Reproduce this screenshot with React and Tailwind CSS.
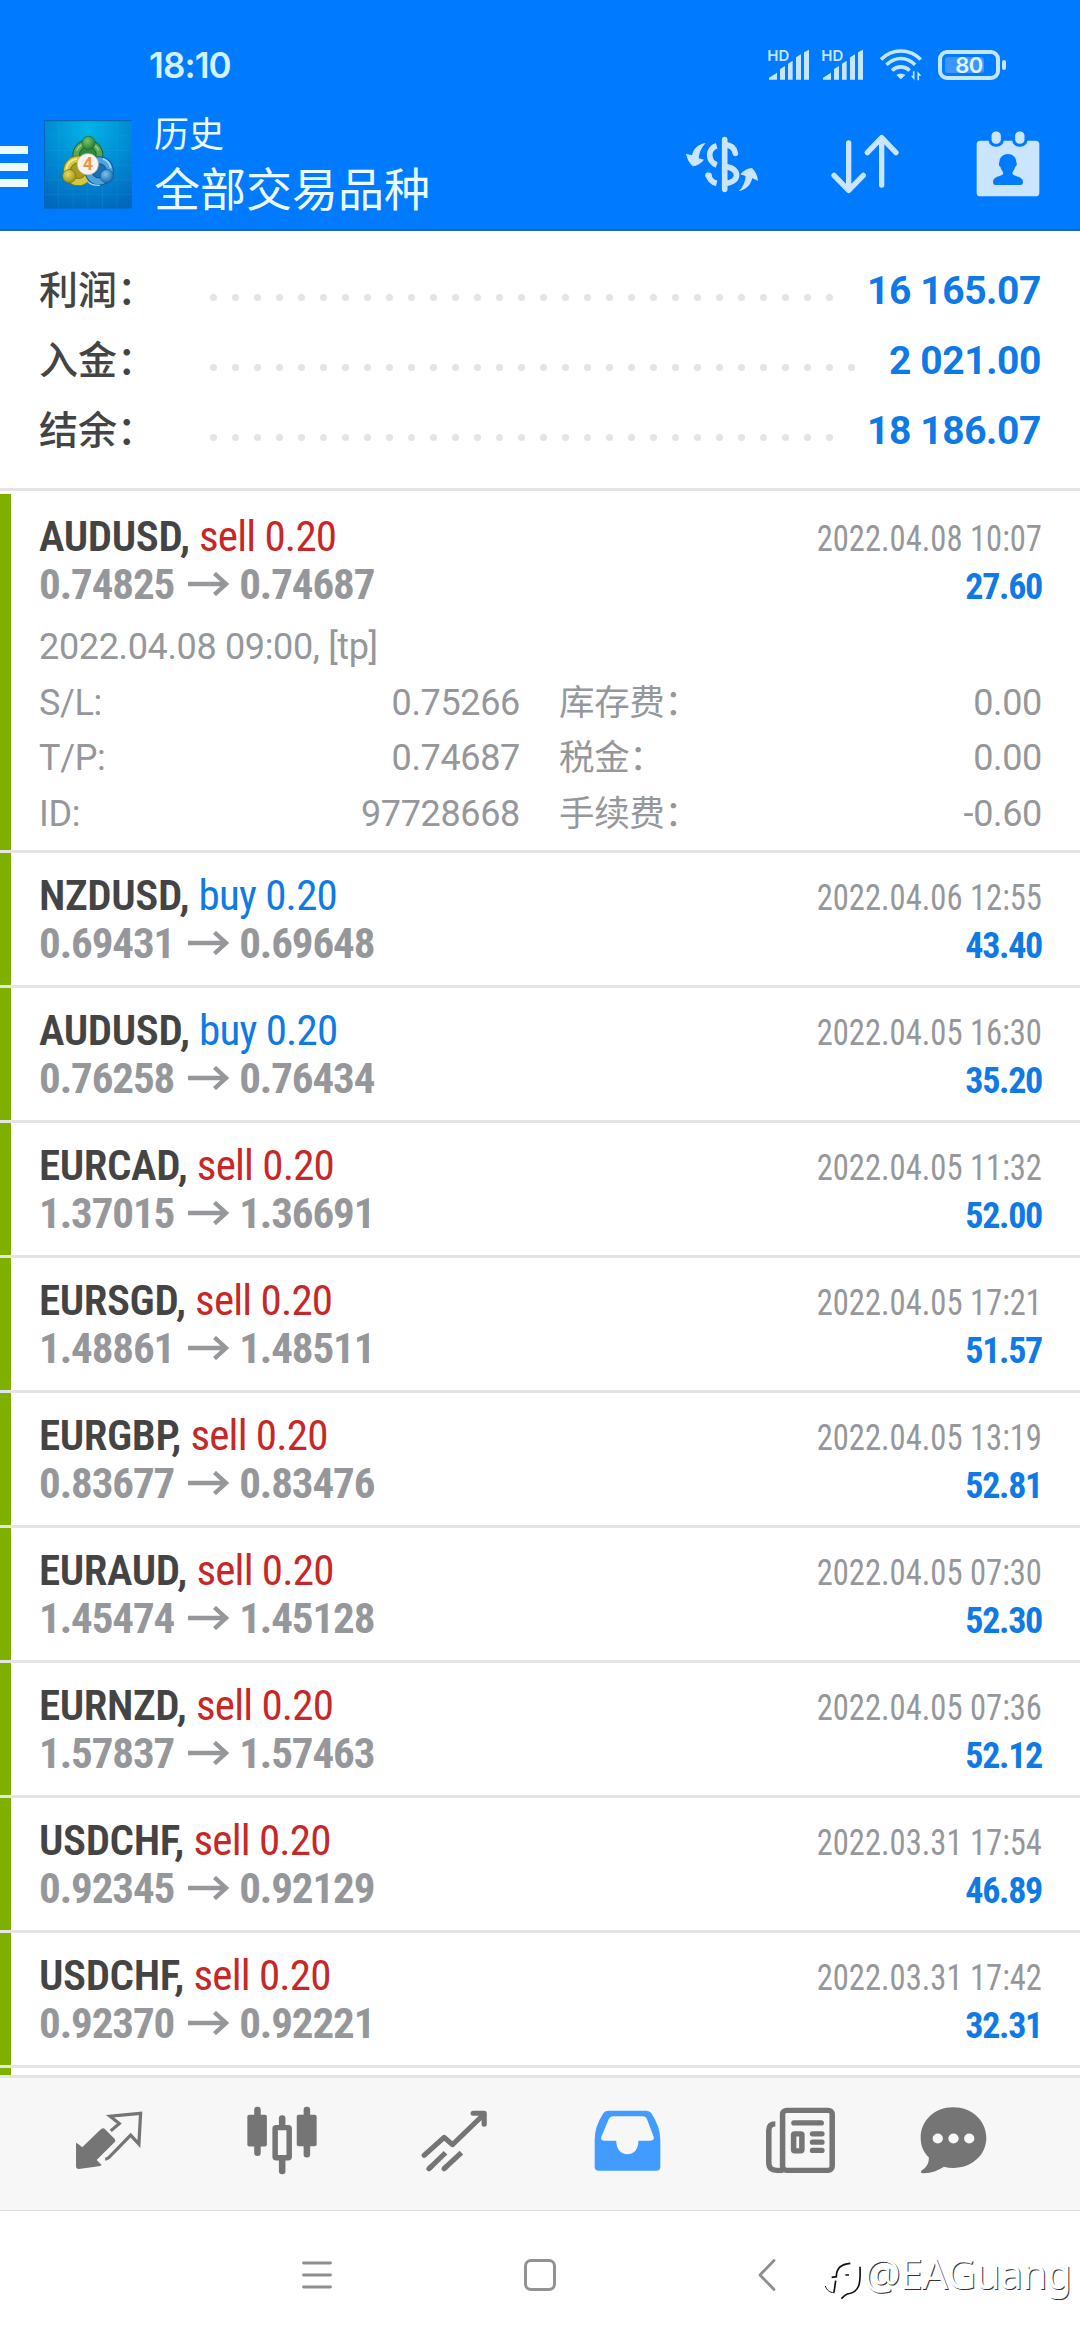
const SUMMARY = [
    { label: '利润：', value: '16 165.07', dots: 29 },
    { label: '入金：', value: '2 021.00', dots: 30 },
    { label: '结余：', value: '18 186.07', dots: 29 },
];

const DEALS = [
    {
        symbol: 'AUDUSD', side: 'sell', open: '0.74825', close: '0.74687', time: '2022.04.08 10:07', profit: '27.60',
        details: {
            comment: '2022.04.08 09:00, [tp]',
            rows: [
                ['S/L:', '0.75266', '库存费：', '0.00'],
                ['T/P:', '0.74687', '税金：', '0.00'],
                ['ID:', '97728668', '手续费：', '-0.60'],
            ],
        },
    },
    { symbol: 'NZDUSD', side: 'buy', open: '0.69431', close: '0.69648', time: '2022.04.06 12:55', profit: '43.40' },
    { symbol: 'AUDUSD', side: 'buy', open: '0.76258', close: '0.76434', time: '2022.04.05 16:30', profit: '35.20' },
    { symbol: 'EURCAD', side: 'sell', open: '1.37015', close: '1.36691', time: '2022.04.05 11:32', profit: '52.00' },
    { symbol: 'EURSGD', side: 'sell', open: '1.48861', close: '1.48511', time: '2022.04.05 17:21', profit: '51.57' },
    { symbol: 'EURGBP', side: 'sell', open: '0.83677', close: '0.83476', time: '2022.04.05 13:19', profit: '52.81' },
    { symbol: 'EURAUD', side: 'sell', open: '1.45474', close: '1.45128', time: '2022.04.05 07:30', profit: '52.30' },
    { symbol: 'EURNZD', side: 'sell', open: '1.57837', close: '1.57463', time: '2022.04.05 07:36', profit: '52.12' },
    { symbol: 'USDCHF', side: 'sell', open: '0.92345', close: '0.92129', time: '2022.03.31 17:54', profit: '46.89' },
    { symbol: 'USDCHF', side: 'sell', open: '0.92370', close: '0.92221', time: '2022.03.31 17:42', profit: '32.31' },
];

function SignalIcon() {
    return (
        <svg width="42" height="32" viewBox="0 0 126 96" className="shrink-0 overflow-visible text-[#c5e6ff]">
            <text x="-2" y="36" fontSize="45" fontWeight="600" fontFamily="Inter, sans-serif" fill="currentColor">HD</text>
            <path fill="currentColor" d="M3 92v-6l24-15v21zM36 92V60l15-9v41zM60 92V44l14-9v57zM84 92V25l15-9v76zM108 92V10l15-8v90z" />
        </svg>
    );
}

function WifiIcon() {
    return (
        <svg width="42" height="34" viewBox="0 0 129 102" className="shrink-0 text-[#c5e6ff]">
            <g fill="none" stroke="currentColor" strokeWidth="11">
                <path d="M3 34C36-1 92-1 125 34" />
                <path d="M20 50C46 25 82 25 108 50" />
                <path d="M37 68C53 53 75 53 91 68" />
            </g>
            <path fill="currentColor" d="M50 82c8-6 20-6 28 0L64 95zM106 70v28l-11-14h6V70zM115 98V70l12 14h-7v14z" />
        </svg>
    );
}

function BatteryIcon() {
    return (
        <div className="flex items-center gap-[2px]">
            <div className="relative w-[62px] h-[30px] rounded-[9px] border-4 border-[#c5e6ff] flex items-center justify-center">
                <span className="absolute left-[3px] top-[3px] w-[39px] h-4 rounded-[3px] bg-[#3d95ff]" />
                <span className="relative font-['Inter',sans-serif] font-semibold text-[22px] leading-none tracking-[-0.5px] text-[#e0f6ff]">80</span>
            </div>
            <span className="w-1 h-[10px] rounded-full bg-[#c5e6ff]" />
        </div>
    );
}

function AppLogo() {
    return (
        <svg width="88" height="89" viewBox="18 20 265 266" className="shrink-0">
            <defs>
                <radialGradient id="logoBg" cx="0.5" cy="0.1" r="0.95">
                    <stop offset="0" stopColor="#00b4e6" />
                    <stop offset="0.55" stopColor="#0088d2" />
                    <stop offset="1" stopColor="#0068bd" />
                </radialGradient>
                <radialGradient id="logoGreen" cx="0.4" cy="0.35" r="0.7">
                    <stop offset="0" stopColor="#7ec36a" />
                    <stop offset="1" stopColor="#1f7a2c" />
                </radialGradient>
                <radialGradient id="logoYellow" cx="0.4" cy="0.35" r="0.7">
                    <stop offset="0" stopColor="#e9dc5a" />
                    <stop offset="1" stopColor="#988c16" />
                </radialGradient>
                <radialGradient id="logoBlue" cx="0.4" cy="0.35" r="0.7">
                    <stop offset="0" stopColor="#7cc4ee" />
                    <stop offset="1" stopColor="#1564ac" />
                </radialGradient>
            </defs>
            <rect x="18" y="20" width="265" height="266" fill="url(#logoBg)" />
            <path d="M18 67h265M18 111h265M18 155h265M18 199h265M18 243h265M62 20v266M106 20v266M150 20v266M194 20v266M238 20v266" stroke="#35b0e4" strokeOpacity="0.25" strokeWidth="2" />
            <path d="M18 21h265M19 20v266" stroke="#0a5fae" strokeWidth="3" />
            <circle cx="150" cy="124" r="35" fill="#2f8a3c" stroke="#1d662b" strokeWidth="23" />
            <circle cx="150" cy="124" r="35" fill="none" stroke="#57a851" strokeWidth="17" />
            <path d="M116 111a37 37 0 0 1 67 0" fill="none" stroke="#9ad08e" strokeWidth="4" />
            <circle cx="121" cy="172" r="34" fill="#a79c22" stroke="#827a19" strokeWidth="24" />
            <circle cx="121" cy="172" r="34" fill="none" stroke="#d3c93c" strokeWidth="18" />
            <path d="M85 169a36 36 0 0 1 32-33" fill="none" stroke="#f3eda0" strokeWidth="5" />
            <circle cx="184" cy="172" r="32" fill="#1d6fb4" stroke="#0f5796" strokeWidth="24" />
            <circle cx="184" cy="172" r="32" fill="none" stroke="#4ba4dd" strokeWidth="18" />
            <path d="M195 136a35 35 0 0 1 24 28" fill="none" stroke="#a0d6f4" strokeWidth="5" />
            <path d="M150 205q14 12 36 11" fill="none" stroke="#a0d6f4" strokeWidth="4" />
            <circle cx="152" cy="88" r="20" fill="url(#logoGreen)" stroke="#1d662b" strokeWidth="2" />
            <circle cx="94" cy="188" r="20" fill="url(#logoYellow)" stroke="#766d12" strokeWidth="2" />
            <circle cx="207" cy="188" r="20" fill="url(#logoBlue)" stroke="#0f5796" strokeWidth="2" />
            <circle cx="150" cy="152" r="32" fill="#f7f4f2" stroke="#b9b5a8" strokeWidth="2" />
            <text x="150" y="171" textAnchor="middle" fontSize="54" fontWeight="700" fontFamily="Roboto, sans-serif" fill="#ef9440">4</text>
        </svg>
    );
}

function CurrencyIcon() {
    return (
        <svg width="90" height="76" viewBox="0 0 270 228" className="shrink-0 text-[#cce5ff]">
            <path fill="currentColor" d="M77 51C55 55 41 66 36 88l-18-5c3 14 9 27 20 38 13-2 24-8 34-20l-16-4c1-17 8-32 21-46zM176 196c22-5 35-17 41-39l17 7c-1-14-7-27-18-38-13 1-25 7-35 19l16 5c-1 18-8 33-21 46z" />
            <g fill="none" stroke="currentColor" strokeWidth="17">
                <path d="M110 59c-28 8-28 48 0 58" />
                <path d="M110 172c-13-3-22-12-24-24" />
                <path d="M84 148h3M134 41v149" strokeLinecap="round" />
                <path d="M136 56c18 2 28 11 30 26" strokeLinecap="round" />
                <path d="M136 122c46 4 44 48 0 50" />
            </g>
        </svg>
    );
}

function SortIcon() {
    return (
        <svg width="70" height="62" viewBox="570 400 210 186" fill="none" stroke="#cce5ff" strokeWidth="16" strokeLinecap="round" strokeLinejoin="round" className="shrink-0">
            <path d="M626 430v142M582 527l44 45 44-45M725 556V414M682 459l43-45 43 45" />
        </svg>
    );
}

function CalendarIcon() {
    return (
        <svg width="64" height="66" viewBox="1008 394 192 198" className="shrink-0">
            <rect x="1010" y="423" width="188" height="167" rx="11" fill="#cce5ff" />
            <g fill="#cce5ff" stroke="#007aff" strokeWidth="9">
                <rect x="1050" y="391" width="37" height="46" rx="17" />
                <rect x="1121" y="391" width="37" height="46" rx="17" />
            </g>
            <path fill="#007aff" d="M1104 463c16 0 25 11 25 25 3 6 1 11-3 13-2 9-9 14-9 20 2 11 32 7 32 26 0 6-3 9-8 9h-74c-5 0-8-3-8-9 0-19 29-15 31-26 0-6-7-11-9-20-4-2-6-7-3-13 0-14 10-25 26-25z" />
        </svg>
    );
}

function ArrowIcon() {
    return (
        <svg width="42" height="24" viewBox="0 0 42 24" fill="none" stroke="#95979b" strokeWidth="4.4">
            <path d="M0 12h38M26.500 1.500L38 12 26.500 22.500" />
        </svg>
    );
}

function QuotesIcon() {
    return (
        <svg width="68" height="59" viewBox="216 188 198 178" preserveAspectRatio="none">
            <path fill="#757575" d="M219 284q8 4 18 13l55-55q6-4 11 0l28 30q5 5 0 10l-52 54 14 14q0 4-8 5l-58 8q-8 0-8-8z" />
            <path fill="none" stroke="#757575" strokeWidth="9.500" d="M320 248l25-22-27-22 89-9-5 93-24-27-64 68q-4 4-10 4" />
        </svg>
    );
}

function ChartIcon() {
    return (
        <svg width="70" height="69" viewBox="714 172 204 208" preserveAspectRatio="none" fill="#757575">
            <rect x="735" y="174" width="19" height="149" rx="9" />
            <rect x="715" y="198" width="57" height="96" rx="6" />
            <rect x="879" y="174" width="19" height="153" rx="9" />
            <rect x="859" y="198" width="58" height="95" rx="6" />
            <rect x="807" y="200" width="19" height="40" rx="9" />
            <rect x="807" y="325" width="19" height="53" rx="9" />
            <rect x="796" y="237" width="41" height="91" rx="3" fill="#f7f7f7" stroke="#757575" strokeWidth="16" />
        </svg>
    );
}

function TradeIcon() {
    return (
        <svg width="67" height="62" viewBox="1222 180 194 186" preserveAspectRatio="none" fill="none" stroke="#757575" strokeWidth="15" strokeLinejoin="round">
            <path strokeLinecap="round" d="M1231 316l58-54 24 22 92-92M1373 190h32v33M1245 356l6-6M1289 356l6-6" />
            <path d="M1245 356l48-48M1289 356l50-48" />
        </svg>
    );
}

function HistoryIcon() {
    return (
        <svg width="67" height="62" viewBox="156 180 196 188" preserveAspectRatio="none" fill="#429bff">
            <path fillRule="evenodd" d="M198 182h112q8 0 14 8 26 42 26 80v82q0 12-12 12H170q-12 0-12-12v-82q0-40 24-78 6-10 16-10zM212 199q-9 0-13 9l-22 55q-1 10 7 10h37c0 26 14 41 33 41s32-15 32-41h36q10 0 9-10l-20-55q-3-9-13-9z" />
        </svg>
    );
}

function NewsIcon() {
    return (
        <svg width="71" height="67" viewBox="655 172 206 202" preserveAspectRatio="none" fill="none" stroke="#757575" strokeWidth="16">
            <rect x="706" y="182" width="144" height="181" rx="12" />
            <path d="M685 223q-19 0-19 20v98q0 22 22 22h20" />
            <path strokeLinecap="round" d="M739 220h79M793 253h27M793 278h27M793 303h27" />
            <rect x="738" y="253" width="24" height="51" rx="3" />
        </svg>
    );
}

function ChatIcon() {
    return (
        <svg width="67" height="67" viewBox="1101 172 196 202" preserveAspectRatio="none">
            <path fill="#757575" d="M1198 173c54 0 97 40 97 92s-43 91-97 91q-14 0-27-4-26 18-58 20-13 0-8-8 23-14 22-40c-16-15-24-35-24-59 0-52 41-92 95-92z" />
            <g fill="#f7f7f7">
                <circle cx="1153" cy="267" r="15" />
                <circle cx="1199" cy="267" r="15" />
                <circle cx="1245" cy="267" r="15" />
            </g>
        </svg>
    );
}

function DealRow({ deal }) {
    const { symbol, side, open, close, time, profit, details } = deal;
    return (
        <li className="flex border-b-3 border-[#e4e4e4]">
            <span className="w-[11px] bg-[#7fb000]" />
            <div className={`flex-1 pl-[28px] pr-[38px] pt-[18px] ${details ? 'h-[356px]' : 'h-[132px]'}`}>
                <div className="flex items-baseline justify-between h-12 leading-[48px] font-['Roboto_Condensed',sans-serif]">
                    <div className="text-[43px]">
                        <span className="font-semibold tracking-[-0.400px] text-[#444444]">{symbol}, </span>
                        <span className={`tracking-[-0.8px] ${side === 'sell' ? 'text-[#c62828]' : 'text-[#0f7ae5]'}`}>{side} 0.20</span>
                    </div>
                    <span className="text-[36px] text-[#95979b] origin-right scale-x-[0.905]">{time}</span>
                </div>
                <div className="flex items-baseline justify-between h-12 leading-[48px] font-bold font-['Roboto_Condensed',sans-serif]">
                    <div className="flex items-center text-[43px] tracking-[-1.100px] text-[#95979b]">
                        <span className="mr-[14px]">{open}</span>
                        <ArrowIcon />
                        <span className="ml-[9px]">{close}</span>
                    </div>
                    <span className="text-[36px] tracking-[-1.300px] text-[#0f7ae5]">{profit}</span>
                </div>
                {details && (
                    <div className="mt-[12px] text-[36px] leading-[55.5px] tracking-[-0.350px] text-[#95979b] font-['Roboto','Noto_Sans_CJK_SC',sans-serif]">
                        <p>{details.comment}</p>
                        {details.rows.map(([l1, v1, l2, v2]) => (
                            <div key={l1} className="flex">
                                <div className="flex justify-between w-[481px]">
                                    <span>{l1}</span>
                                    <span>{v1}</span>
                                </div>
                                <div className="flex flex-1 justify-between ml-[39px]">
                                    <span className="text-[35.5px]">{l2}</span>
                                    <span>{v2}</span>
                                </div>
                            </div>
                        ))}
                    </div>
                )}
            </div>
        </li>
    );
}

export default function App() {
    return (
        <div className="relative flex flex-col w-[1080px] h-[2340px] bg-white overflow-hidden font-['Roboto','Noto_Sans_CJK_SC',sans-serif]">
            {/* Header */}
            <header className="h-[231px] shrink-0 bg-[#007aff] border-b-2 border-[#1c66b5] text-[#eafaff]">
                <div className="flex items-center justify-between h-[104px] pt-[26px] pl-[149px] pr-[74px]">
                    <span className="font-['Inter',sans-serif] font-semibold text-[35px] leading-none tracking-[-0.9px] text-[#d5f1ff]">18:10</span>
                    <div className="flex items-center gap-4">
                        <div className="flex gap-3">
                            <SignalIcon />
                            <SignalIcon />
                        </div>
                        <WifiIcon />
                        <BatteryIcon />
                    </div>
                </div>
                <div className="flex h-[125px]">
                    <div className="flex flex-col justify-center gap-[8.500px] w-7">
                        <span className="h-2 bg-[#eafaff]" />
                        <span className="h-2 bg-[#eafaff]" />
                        <span className="h-2 bg-[#eafaff]" />
                    </div>
                    <div className="ml-4 pt-4">
                        <AppLogo />
                    </div>
                    <div className="ml-[22px] pt-[9px] flex-1">
                        <h2 className="text-[35px] leading-[46px]">历史</h2>
                        <h1 className="text-[46px] leading-[63px]">全部交易品种</h1>
                    </div>
                    <div className="flex items-center pr-[40px] pb-[6px]">
                        <CurrencyIcon />
                        <span className="w-[60px]" />
                        <SortIcon />
                        <span className="w-[76px]" />
                        <CalendarIcon />
                    </div>
                </div>
            </header>

            {/* Account summary */}
            <section className="h-[260px] shrink-0 border-b-3 border-[#e4e4e4] pt-[25px] px-[39px] text-[39px] leading-[70px]">
                {SUMMARY.map((row) => (
                    <div key={row.label} className="flex items-center h-[70px]">
                        <span className="w-[171px] font-medium text-[#444444]">{row.label}</span>
                        <div className="flex flex-1 gap-[15px] mt-[13px]">
                            {Array.from({ length: row.dots }, (_, i) => (
                                <span key={i} className="size-[7px] rounded-full bg-[#e4e4e4]" />
                            ))}
                        </div>
                        <span className="font-bold tracking-[-0.4px] text-[#0f7ae5]">{row.value}</span>
                    </div>
                ))}
            </section>

            {/* Deals */}
            <ul className="h-[1584px] shrink-0 pt-[3px] overflow-hidden">
                {DEALS.map((deal) => (
                    <DealRow key={deal.time} deal={deal} />
                ))}
                <li className="w-[11px] h-[7px] bg-[#7fb000]" />
            </ul>

            {/* Tabs */}
            <nav className="flex items-center h-[136px] shrink-0 pl-[22px] pb-[7px] bg-[#f7f7f7] border-t-3 border-b border-t-[#e4e4e4] border-b-[#dddddd]">
                <button className="flex justify-center w-[173px]"><QuotesIcon /></button>
                <button className="flex justify-center w-[173px]"><ChartIcon /></button>
                <button className="flex justify-center w-[173px]"><TradeIcon /></button>
                <button className="flex justify-center w-[173px]"><HistoryIcon /></button>
                <button className="flex justify-center w-[173px]"><NewsIcon /></button>
                <button className="flex justify-center w-[132px]"><ChatIcon /></button>
            </nav>

            {/* System navigation */}
            <footer className="flex items-center flex-1 pl-[205px] pb-[2px]">
                <div className="flex justify-center w-[223px]">
                    <svg width="30" height="28" viewBox="0 0 30 28" stroke="#8e8e8e" strokeWidth="2.800" strokeLinecap="round">
                        <path d="M1.500 2h27M1.500 14h27M1.500 26h27" />
                    </svg>
                </div>
                <div className="flex justify-center w-[223px]">
                    <span className="w-8 h-8 rounded-[7px] border-3 border-[#929292]" />
                </div>
                <div className="flex justify-center w-[231px]">
                    <svg width="18" height="32" viewBox="0 0 18 32" fill="none" stroke="#8e8e8e" strokeWidth="2.800" strokeLinecap="round" strokeLinejoin="round">
                        <path d="M16 1.500L2 16l14 14.500" />
                    </svg>
                </div>
            </footer>

            {/* Watermark */}
            <div className="absolute right-[9px] bottom-[38px] flex items-start gap-[2px]">
                <svg width="38" height="42" viewBox="14 44 114 126" fill="none" stroke="#111111" strokeWidth="5" className="mt-3">
                    <path d="M37 96l14-2c0-26 14-38 42-40M78 89h11M122 64c2 48 0 78-38 82-8 3-12 8-18 14M49 106l-5 35" />
                    <path strokeWidth="3" d="M18 122c4 12 12 20 27 20" />
                </svg>
                <span className="font-['Noto_Sans',sans-serif] text-[41px] leading-[50px] tracking-[-0.8px] text-white [text-shadow:1px_1px_0_#333333]">@EAGuang</span>
            </div>
        </div>
    );
}
